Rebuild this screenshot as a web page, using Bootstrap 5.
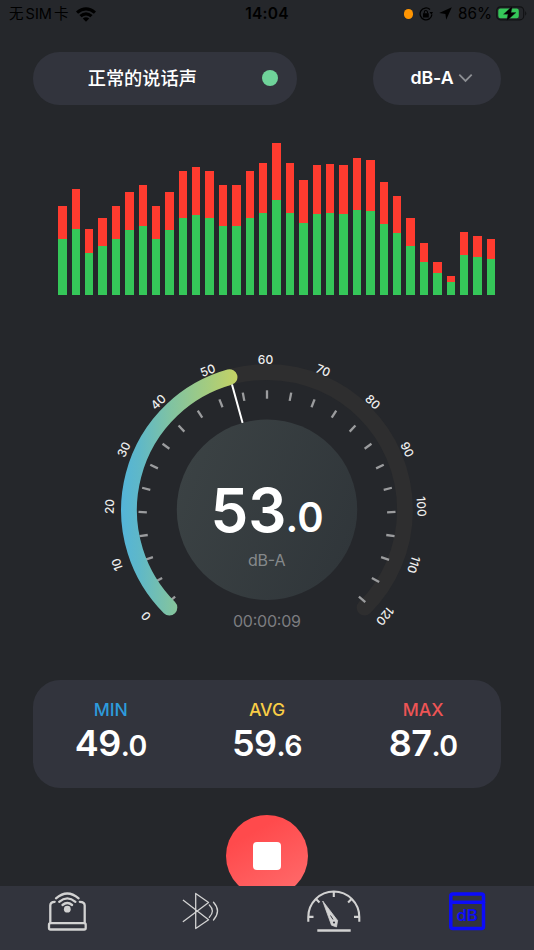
<!DOCTYPE html>
<html lang="zh-CN">
<head>
<meta charset="utf-8">
<meta name="viewport" content="width=device-width, initial-scale=1">
<title>dB Meter</title>
<link rel="stylesheet" href="https://cdn.jsdelivr.net/npm/bootstrap@5.3.0/dist/css/bootstrap.min.css">
<style>
body{background:#25272b;font-family:Inter,"Noto Sans CJK SC",sans-serif;color:#fff;line-height:1}
.screen{width:534px;height:950px}
.statusbar{height:28px;padding:0 7px 0 9px;color:#000;font-size:15px}
.statusbar .side{width:200px}
.carrier{font-size:14.5px;word-spacing:-2px}
.clock{font-weight:600;font-size:15.5px;letter-spacing:.25px;padding-right:2px}
.status-icons{gap:6px}
.pct{font-size:15.3px;margin-right:-2px}
.mic-dot{width:9.5px;height:9.5px;background:#ff9502}
.gutter{padding:0 32.7px}
.controls{margin-top:24px}
.pill{height:52.7px;background:#32343d;border-radius:27px;font-size:18px}
.level{width:264px;padding-left:55px;padding-right:18.5px;font-weight:500;font-size:18.2px}
.level-dot{width:16px;height:16px;background:#6fd39a}
.weighting{width:128.6px;padding-left:9px;font-weight:600;font-size:17.8px;letter-spacing:-.1px}
.spectrum{height:152px;margin:37.9px 38.8px 0 58.2px}
.bar{width:8.4px}
.bar .peak{background:#ff3b2f}
.bar .avg{background:#35c759}
.gauge{margin-top:45.4px;height:300px}
.summary{margin:40px 32.7px 0;height:108px;background:#32343d;border-radius:27px;padding-top:20px}
.cap{font-size:17.6px;font-weight:500;line-height:20px}
.val{font-size:36px;font-weight:600;line-height:36px;margin-top:5px;letter-spacing:-.5px}
.val span{font-size:28.5px;letter-spacing:-.5px}
.min{color:#2d9bdc}.avg-c{color:#f9cd46}.max{color:#ee5455}
.stop{width:82px;height:82px;margin-top:27px;background:linear-gradient(150deg,#ff4a4c 25%,#ff6e6e);border:0}
.stop i{width:28.5px;height:28.5px;border-radius:4px;background:#fff}
.tabs{height:63.8px;background:#32343d}
</style>
<script src="https://cdn.jsdelivr.net/npm/bootstrap@5.3.0/dist/js/bootstrap.bundle.min.js"></script>
</head>
<body>
<div class="screen position-relative overflow-hidden">
  <header class="statusbar d-flex align-items-center justify-content-between">
    <div class="side d-flex align-items-center">
      <span class="carrier">无 SIM 卡</span>
      <svg class="ms-2" width="20" height="15" viewBox="0 0 20 15"><path d="M0 4.400Q10-4 20 4.400L17.900 6.700Q10 .2 2.100 6.700ZM3.400 8Q10 2.600 16.600 8L14.400 10.200Q10 6.700 5.600 10.200ZM6.800 11.400Q10 8.900 13.200 11.400L10 14.800Z"/></svg>
    </div>
    <span class="clock">14:04</span>
    <div class="side status-icons d-flex align-items-center justify-content-end">
      <span class="mic-dot rounded-circle"></span>
      <svg width="14" height="14" viewBox="0 0 13 13"><path d="M10.200 2.300A5.500 5.500 0 1 0 12 7" fill="none" stroke="#000" stroke-width="1.200"/><path d="M9.700 4.600H13L11.600 7.200ZM3.700 5.900H9.100V9.700H3.700Z"/><path d="M4.900 6V4.800a1.500 1.500 0 0 1 3 0V6" fill="none" stroke="#000"/></svg>
      <svg width="13" height="13" viewBox="0 0 13 13"><path d="M12.800.2L7.200 12.800 6.400 6.900.2 5.900Z"/></svg>
      <span class="pct">86%</span>
      <svg width="31" height="15" viewBox="0 0 31 15"><rect x=".7" y=".8" width="27" height="13" rx="3.800" fill="none" stroke="#111214" stroke-width="1.200"/><path d="M29.200 5q2.200 2.400 0 4.800z" fill="#111214"/><rect x="2.300" y="2.500" width="20.500" height="9.800" rx="2.200" fill="#35c759"/><path d="M16.500 0L7.500 8.200H12L10.500 15 20 6.600H15Z" stroke="#25272b" stroke-width=".4"/></svg>
    </div>
  </header>

  <section class="controls gutter d-flex justify-content-between">
    <div class="pill level d-flex align-items-center justify-content-between"><span>正常的说话声</span><span class="level-dot rounded-circle"></span></div>
    <div class="pill weighting d-flex align-items-center justify-content-center">dB-A
      <svg class="ms-1" width="15" height="10" viewBox="0 0 15 10"><path d="M1.300 1.600L7.500 7.900 13.700 1.600" fill="none" stroke="#8d8f94" stroke-width="1.800"/></svg>
    </div>
  </section>

  <section class="spectrum d-flex align-items-end justify-content-between" id="spectrum"></section>

  <svg class="gauge d-block" id="gauge" width="534" height="300" viewBox="0 340 534 300" font-family="Inter, sans-serif">
    <defs>
      <linearGradient id="sweep" gradientUnits="userSpaceOnUse" x1="122" y1="0" x2="238" y2="0">
        <stop offset="0" stop-color="#54b4d8"/><stop offset=".15" stop-color="#5fb8c8"/><stop offset=".42" stop-color="#80c3a2"/><stop offset=".75" stop-color="#a5cc7e"/><stop offset="1" stop-color="#c6d364"/>
      </linearGradient>
      <linearGradient id="dial" x1="0" y1=".3" x2="1" y2=".7"><stop offset="0" stop-color="#3b4244"/><stop offset="1" stop-color="#30363a"/></linearGradient>
    </defs>
    <path d="M169.420 607.580A138 138 0 1 1 364.580 607.580" fill="none" stroke="#2e2e2f" stroke-width="15.800" stroke-linecap="round"/>
    <g id="ticks" stroke="#9b9c9e" stroke-width="2.300"></g>
    <path d="M169.420 607.580A138 138 0 0 1 229.540 377.180" fill="none" stroke="url(#sweep)" stroke-width="15.800" stroke-linecap="round"/>
    <path d="M232 384.500L242.600 423" stroke="#fff" stroke-width="2"/>
    <circle cx="267" cy="509.700" r="90.200" fill="url(#dial)"/>
    <g id="labels" fill="#eee" font-size="12" font-weight="500" text-anchor="middle"></g>
    <text x="210.500" y="531.500" fill="#fff" font-size="60" font-weight="600" textLength="76" lengthAdjust="spacingAndGlyphs">53</text>
    <text x="285.500" y="531.500" fill="#fff" font-size="41" font-weight="600" textLength="38" lengthAdjust="spacingAndGlyphs">.0</text>
    <text x="248" y="566" fill="#85898b" font-size="16" textLength="37.500">dB-A</text>
    <text x="233" y="626.500" fill="#7c7d80" font-size="16" textLength="68">00:00:09</text>
  </svg>

  <section class="summary">
    <div class="row g-0 text-center">
      <div class="col"><div class="cap min">MIN</div><div class="val">49<span>.0</span></div></div>
      <div class="col"><div class="cap avg-c">AVG</div><div class="val">59<span>.6</span></div></div>
      <div class="col"><div class="cap max">MAX</div><div class="val">87<span>.0</span></div></div>
    </div>
  </section>

  <button class="stop rounded-circle d-flex align-items-center justify-content-center mx-auto p-0" aria-label="停止"><i></i></button>

  <nav class="tabs position-absolute bottom-0 start-0 w-100">
    <svg class="d-block" width="534" height="64" viewBox="0 886 534 64" fill="none" stroke="#d2d2d2" stroke-linecap="round">
      <g stroke-width="2.300">
        <path d="M54.700 901.800Q50.300 901.800 50.300 905.500V922.500M79.800 901.800Q84.700 901.800 84.700 905.500V922.500"/>
        <rect x="49" y="923.200" width="36.700" height="6.300" rx="1.500"/>
        <path d="M56 898.300Q67.300 888.600 78.600 898.300M59.200 901.800Q67.300 895 75.400 901.800M62.500 905Q67.300 901 72.100 905"/>
        <circle cx="67.300" cy="909.200" r="3.400" fill="#d2d2d2" stroke="none"/>
      </g>
      <g stroke-width="1.300" stroke-linejoin="round">
        <path d="M183.300 900.300L208.600 919.800 195.700 928.500V893.500L208.600 902.500 183.300 921.500"/>
        <path d="M209.300 905Q215.500 911 209.300 917.300M213.500 902.300Q221.500 911 213.500 920"/>
      </g>
      <g stroke-width="2.100" stroke-linecap="butt">
        <path d="M308.300 921.800V917A25.500 25.500 0 0 1 359.300 917V921.800M309 916.900H313.500M354 916.900H359M333.800 892.500V897M315.800 898.800L319.500 902.500M351.800 898.800L348.100 902.500"/>
        <path d="M317.300 930.500H350.700" stroke-width="2.600"/>
        <path d="M322.700 901L337.600 920.500 336.500 927 331.500 925.200Z" fill="#d2d2d2" stroke-width=".8"/>
        <path d="M330.500 915.500L333 919.500" stroke="#32343d" stroke-width="1"/><circle cx="334" cy="922.500" r="1.100" fill="#32343d" stroke="none"/>
      </g>
      <g stroke="#0c0cfa" stroke-width="3.500" stroke-linejoin="round">
        <rect x="450.800" y="894" width="32.700" height="34.500" rx="2"/><path d="M451 902.200H483.500"/>
        <text x="456.400" y="921.300" font-family="Inter, sans-serif" font-size="16.200" font-weight="600" textLength="21.500" lengthAdjust="spacingAndGlyphs" fill="#0c0cfa" stroke="none">dB</text>
      </g>
    </svg>
  </nav>
</div>
<script>
// [total height, green height] of each spectrum bar
const bars=[[266,167],[317,198],[197,125],[230,145],[266,167],[308,193],[329,206],[266,167],[308,193],[371,230],[383,239],[371,230],[329,206],[329,206],[371,230],[395,246],[455,284],[395,246],[343,214],[389,242],[392,244],[389,242],[410,254],[404,251],[338,211],[296,185],[230,145],[155,99],[98,64],[56,38],[188,119],[176,113],[167,107]];
document.getElementById('spectrum').innerHTML=bars.map(([t,g])=>`<div class="bar d-flex flex-column"><div class="peak" style="height:${((t-g)/3).toFixed(2)}px"></div><div class="avg" style="height:${(g/3).toFixed(2)}px"></div></div>`).join('');
let ticks='',labels='';
for(let i=-12;i<=12;i++) ticks+=`<path d="M267 390.300V398.700" transform="rotate(${i*10.85} 267 519)"/>`;
for(let i=0;i<=12;i++) labels+=`<text x="265.500" y="363.600" transform="rotate(${(i-6)*21.67} 265.500 515.500)">${i*10}</text>`;
document.getElementById('ticks').innerHTML=ticks;
document.getElementById('labels').innerHTML=labels;
</script>
</body>
</html>
